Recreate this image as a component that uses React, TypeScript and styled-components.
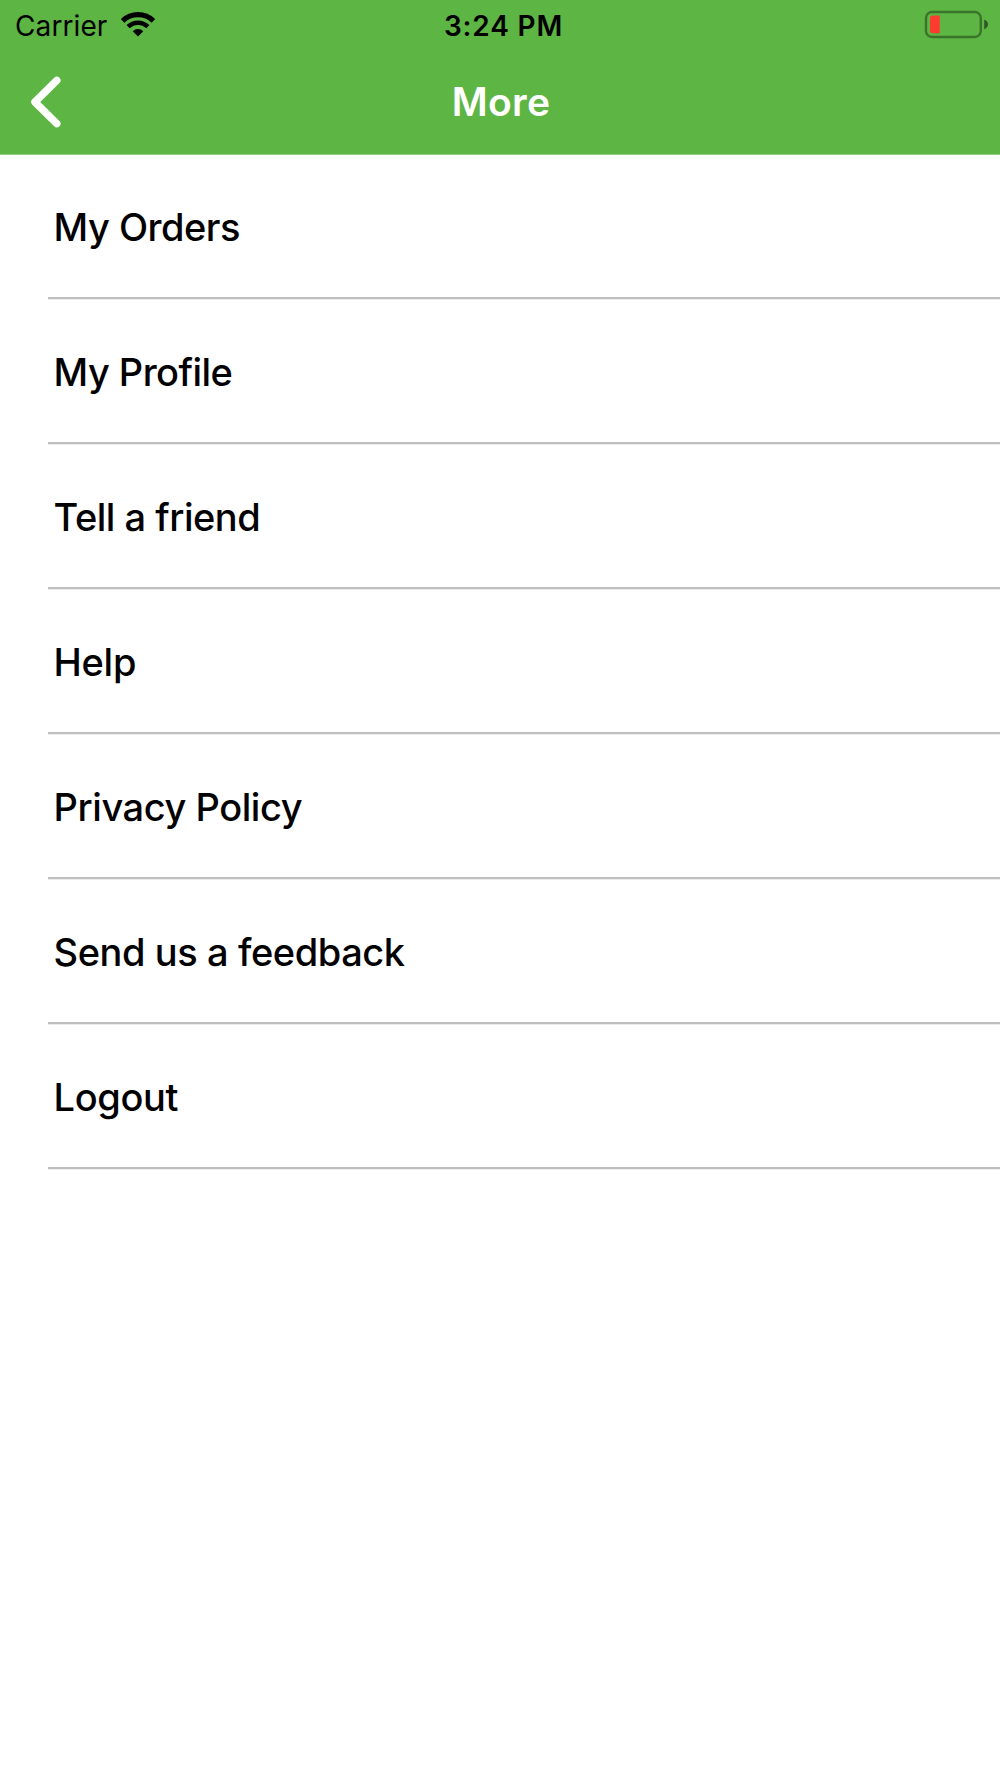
import React from "react";
import styled, { createGlobalStyle } from "styled-components";

const GlobalStyle = createGlobalStyle`
  *, *::before, *::after { box-sizing: border-box; }
  body {
    margin: 0;
    background: #fff;
    color: #000;
    font-family: Inter, "Liberation Sans", sans-serif;
  }
`;

const Screen = styled.main`
  display: flex;
  flex-direction: column;
  width: 100%;
  min-height: 1778px;
  background: #fff;
`;

const Header = styled.header`
  display: flex;
  flex-direction: column;
  height: 155px;
  border-bottom: 1px solid #92cd82;
  background: #5db544;
`;

const StatusBar = styled.div`
  display: grid;
  grid-template-columns: 1fr auto 1fr;
  align-items: center;
  height: 50px;
  padding: 0 11px 0 15px;
  font-size: 28px;
  line-height: 34px;
`;

const Network = styled.div`
  display: flex;
  align-items: center;
  gap: 12.5px;
`;

const Carrier = styled.span`
  padding-top: 1px;
  letter-spacing: 0.1px;
`;

const WifiIcon = styled.svg`
  display: block;
  width: 36px;
  height: 26px;
`;

const Clock = styled.time`
  padding: 1px 0 0 3px;
  font-weight: 580;
  letter-spacing: 0.82px;
`;

const BatteryIcon = styled.svg`
  display: block;
  width: 66px;
  height: 30px;
  justify-self: end;
`;

const NavBar = styled.nav`
  display: grid;
  grid-template-columns: 1fr auto 1fr;
  align-items: center;
  flex: 1;
  padding: 0 28px;
`;

const BackButton = styled.button`
  display: block;
  width: 36px;
  height: 56px;
  padding: 0;
  border: 0;
  background: none;
  color: #fff;
  cursor: pointer;

  svg { display: block; }
`;

const Title = styled.h1`
  margin: 0;
  padding-left: 2px;
  color: #fff;
  font-size: 39px;
  font-weight: 570;
  line-height: 48px;
  letter-spacing: 0.25px;
`;

const Menu = styled.ul`
  margin: -0.6px 0 0;
  padding: 0 0 0 48px;
  list-style: none;
`;

const MenuItem = styled.li`
  display: flex;
  align-items: center;
  height: 144.95px;
  padding: 2.7px 0 0 5.6px;
  border-bottom: 2px solid #bfbfbf;
  box-shadow: 0 1px 0 #ececec;
`;

const MenuLabel = styled.span<{ $tracking: number }>`
  font-size: 38px;
  font-weight: 470;
  line-height: 46px;
  letter-spacing: ${({ $tracking }) => $tracking}px;
  white-space: nowrap;
`;

const entries = [
  { label: "My Orders", tracking: -0.53 },
  { label: "My Profile", tracking: -0.56 },
  { label: "Tell a friend", tracking: -0.49 },
  { label: "Help", tracking: -0.3 },
  { label: "Privacy Policy", tracking: -0.45 },
  { label: "Send us a feedback", tracking: -0.42 },
  { label: "Logout", tracking: -0.4 },
];

export default function App() {
  return (
    <Screen>
      <GlobalStyle />
      <Header>
        <StatusBar>
          <Network>
            <Carrier>Carrier</Carrier>
            <WifiIcon viewBox="0 0 36 26" aria-label="Wi-Fi">
              <g fill="none" stroke="#000">
                <path d="M2.6 8.9A22.2 22.2 0 0 1 33.4 8.9" strokeWidth="5.2" />
                <path d="M8.1 14.7A14.2 14.2 0 0 1 27.9 14.7" strokeWidth="4.6" />
              </g>
              <path d="M12.7 19.2A7.6 7.6 0 0 1 23.3 19.2L18 24.5Z" fill="#000" />
            </WifiIcon>
          </Network>
          <Clock>3:24 PM</Clock>
          <BatteryIcon viewBox="0 0 66 30" aria-label="Low battery">
            <rect x="3" y="2" width="54.8" height="25" rx="6" fill="none" stroke="#3a732a" strokeWidth="2.4" />
            <path d="M9.5 5.5H16.8V23.3H9.5Q7 23.3 7 20.8V8Q7 5.5 9.5 5.5Z" fill="#ff3b30" />
            <path d="M61.2 9.4Q65 11 65 14.3T61.2 19.3Z" fill="#2e5a22" />
          </BatteryIcon>
        </StatusBar>
        <NavBar>
          <BackButton aria-label="Back">
            <svg width="36" height="56" viewBox="0 0 36 56" fill="none" stroke="currentColor" strokeWidth="7.4" strokeLinecap="round" strokeLinejoin="round">
              <path d="M28.8 6.3L6.9 28L28.8 49.7" />
            </svg>
          </BackButton>
          <Title>More</Title>
        </NavBar>
      </Header>
      <Menu>
        {entries.map(({ label, tracking }) => (
          <MenuItem key={label}>
            <MenuLabel $tracking={tracking}>{label}</MenuLabel>
          </MenuItem>
        ))}
      </Menu>
    </Screen>
  );
}
